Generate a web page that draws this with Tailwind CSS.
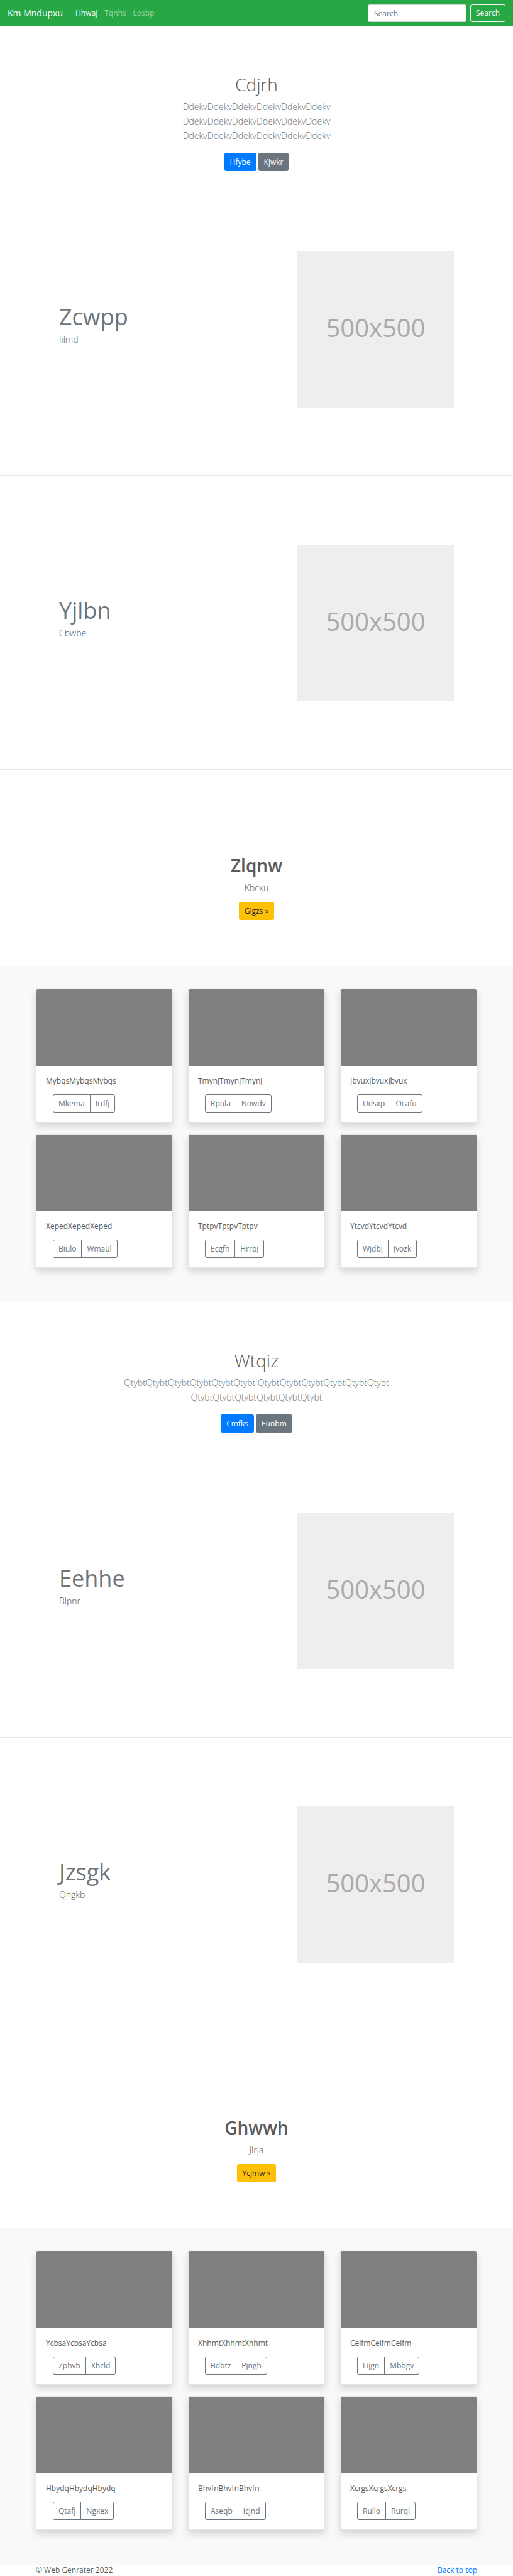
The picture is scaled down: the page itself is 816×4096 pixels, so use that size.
<!DOCTYPE html>
<html lang="en">
<head>
<meta charset="utf-8">
<meta name="viewport" content="width=device-width, initial-scale=1">
<title>Km Mndupxu</title>
<script src="https://cdn.jsdelivr.net/npm/@tailwindcss/browser@4"></script>
</head>
<body class="bg-white font-['Open_Sans','Noto_Sans',sans-serif] text-xs leading-[18px] text-[#5a5a5a]">

<header id="top">
  <nav class="flex items-center bg-[#28a745] px-3 py-[7px]">
    <a href="#" class="mr-5 text-sm font-medium text-white">Km Mndupxu</a>
    <ul class="flex flex-1 gap-[11px]">
      <li><a href="#" class="text-white">Hhwaj</a></li>
      <li><a href="#" class="text-white/50">Tqnhs</a></li>
      <li><a href="#" class="text-white/50">Losbp</a></li>
    </ul>
    <form class="flex gap-[6px]">
      <input type="search" aria-label="Search" placeholder="Search" class="h-[28px] w-[157px] rounded-[3px] border border-[#ced4da] bg-white px-[9px] text-xs placeholder:text-[#6c757d]">
      <button type="button" class="h-[28px] rounded-[3px] border border-[#f8f9fa] px-2 text-[#f8f9fa]">Search</button>
    </form>
  </nav>
</header>

<main>
  <section class="flex flex-col items-center px-[184px] pt-[74px] pb-[18px] text-center">
    <h1 class="mb-[6px] text-[28px] leading-9 font-light">Cdjrh</h1>
    <p class="text-sm leading-[23px] font-light text-[#6c757d]">DdekvDdekvDdekvDdekvDdekvDdekv<br>DdekvDdekvDdekvDdekvDdekvDdekv<br>DdekvDdekvDdekvDdekvDdekvDdekv</p>
    <div class="mt-4 flex gap-[3px]">
      <button type="button" class="h-[29px] rounded-[3px] bg-[#007bff] px-[9px] text-white">Hfybe</button>
      <button type="button" class="h-[29px] rounded-[3px] bg-[#6c757d] px-[9px] text-white">Kjwkr</button>
    </div>
  </section>

  <section class="flex justify-between border-b border-black/10 px-[94px] pt-[109px] pb-[108px]">
    <div class="pt-[81px]">
      <h2 class="text-[36px] leading-[48px] text-[#6c757d]">Zcwpp</h2>
      <p class="text-sm leading-[23px] font-light">Iilmd</p>
    </div>
    <div role="img" aria-label="500x500" class="flex size-[249px] items-center justify-center bg-[#eee] pb-[6px] text-[40px] text-[#aaa]">500x500</div>
  </section>

  <section class="flex justify-between border-b border-black/10 px-[94px] pt-[109px] pb-[108px]">
    <div class="pt-[81px]">
      <h2 class="text-[36px] leading-[48px] text-[#6c757d]">Yjlbn</h2>
      <p class="text-sm leading-[23px] font-light">Cbwbe</p>
    </div>
    <div role="img" aria-label="500x500" class="flex size-[249px] items-center justify-center bg-[#eee] pb-[6px] text-[40px] text-[#aaa]">500x500</div>
  </section>

  <section class="flex flex-col items-center pt-[134px] pb-[73px] text-center">
    <h2 class="mb-[6px] text-[28px] leading-9 font-semibold">Zlqnw</h2>
    <p class="text-sm leading-[23px] font-light">Kbcxu</p>
    <button type="button" class="mt-[11px] h-[29px] rounded-[3px] bg-[#ffc107] px-[9px] text-[#212529]">Gigzs »</button>
  </section>

  <section class="grid grid-cols-3 gap-x-6 gap-y-[18px] bg-[#f8f9fa] px-[57px] pt-9 pb-[55px]">
    <article class="overflow-hidden rounded-[3px] border border-black/10 bg-white shadow-[0_6px_12px_rgba(0,0,0,0.15)]">
      <div class="h-[122px] bg-[#808080]"></div>
      <div class="p-[15px]">
        <p class="mb-3">MybqsMybqsMybqs</p>
        <div class="ml-[11px] flex text-[#6c757d]">
          <button type="button" class="h-[29px] rounded-l-[3px] border border-[#6c757d] px-2">Mkema</button>
          <button type="button" class="-ml-px h-[29px] rounded-r-[3px] border border-[#6c757d] px-2">Irdfj</button>
        </div>
      </div>
    </article>
    <article class="overflow-hidden rounded-[3px] border border-black/10 bg-white shadow-[0_6px_12px_rgba(0,0,0,0.15)]">
      <div class="h-[122px] bg-[#808080]"></div>
      <div class="p-[15px]">
        <p class="mb-3">TmynjTmynjTmynj</p>
        <div class="ml-[11px] flex text-[#6c757d]">
          <button type="button" class="h-[29px] rounded-l-[3px] border border-[#6c757d] px-2">Rpula</button>
          <button type="button" class="-ml-px h-[29px] rounded-r-[3px] border border-[#6c757d] px-2">Nowdv</button>
        </div>
      </div>
    </article>
    <article class="overflow-hidden rounded-[3px] border border-black/10 bg-white shadow-[0_6px_12px_rgba(0,0,0,0.15)]">
      <div class="h-[122px] bg-[#808080]"></div>
      <div class="p-[15px]">
        <p class="mb-3">JbvuxJbvuxJbvux</p>
        <div class="ml-[11px] flex text-[#6c757d]">
          <button type="button" class="h-[29px] rounded-l-[3px] border border-[#6c757d] px-2">Udsxp</button>
          <button type="button" class="-ml-px h-[29px] rounded-r-[3px] border border-[#6c757d] px-2">Ocafu</button>
        </div>
      </div>
    </article>
    <article class="overflow-hidden rounded-[3px] border border-black/10 bg-white shadow-[0_6px_12px_rgba(0,0,0,0.15)]">
      <div class="h-[122px] bg-[#808080]"></div>
      <div class="p-[15px]">
        <p class="mb-3">XepedXepedXeped</p>
        <div class="ml-[11px] flex text-[#6c757d]">
          <button type="button" class="h-[29px] rounded-l-[3px] border border-[#6c757d] px-2">Biulo</button>
          <button type="button" class="-ml-px h-[29px] rounded-r-[3px] border border-[#6c757d] px-2">Wmaul</button>
        </div>
      </div>
    </article>
    <article class="overflow-hidden rounded-[3px] border border-black/10 bg-white shadow-[0_6px_12px_rgba(0,0,0,0.15)]">
      <div class="h-[122px] bg-[#808080]"></div>
      <div class="p-[15px]">
        <p class="mb-3">TptpvTptpvTptpv</p>
        <div class="ml-[11px] flex text-[#6c757d]">
          <button type="button" class="h-[29px] rounded-l-[3px] border border-[#6c757d] px-2">Ecgfh</button>
          <button type="button" class="-ml-px h-[29px] rounded-r-[3px] border border-[#6c757d] px-2">Hrrbj</button>
        </div>
      </div>
    </article>
    <article class="overflow-hidden rounded-[3px] border border-black/10 bg-white shadow-[0_6px_12px_rgba(0,0,0,0.15)]">
      <div class="h-[122px] bg-[#808080]"></div>
      <div class="p-[15px]">
        <p class="mb-3">YtcvdYtcvdYtcvd</p>
        <div class="ml-[11px] flex text-[#6c757d]">
          <button type="button" class="h-[29px] rounded-l-[3px] border border-[#6c757d] px-2">Wjdbj</button>
          <button type="button" class="-ml-px h-[29px] rounded-r-[3px] border border-[#6c757d] px-2">Jvozk</button>
        </div>
      </div>
    </article>
  </section>

  <section class="flex flex-col items-center px-[184px] pt-[74px] pb-[18px] text-center">
    <h1 class="mb-[6px] text-[28px] leading-9 font-light">Wtqiz</h1>
    <p class="text-sm leading-[23px] font-light text-[#6c757d]">QtybtQtybtQtybtQtybtQtybtQtybt QtybtQtybtQtybtQtybtQtybtQtybt QtybtQtybtQtybtQtybtQtybtQtybt</p>
    <div class="mt-4 flex gap-[3px]">
      <button type="button" class="h-[29px] rounded-[3px] bg-[#007bff] px-[9px] text-white">Cmfks</button>
      <button type="button" class="h-[29px] rounded-[3px] bg-[#6c757d] px-[9px] text-white">Eunbm</button>
    </div>
  </section>

  <section class="flex justify-between border-b border-black/10 px-[94px] pt-[109px] pb-[108px]">
    <div class="pt-[81px]">
      <h2 class="text-[36px] leading-[48px] text-[#6c757d]">Eehhe</h2>
      <p class="text-sm leading-[23px] font-light">Blpnr</p>
    </div>
    <div role="img" aria-label="500x500" class="flex size-[249px] items-center justify-center bg-[#eee] pb-[6px] text-[40px] text-[#aaa]">500x500</div>
  </section>

  <section class="flex justify-between border-b border-black/10 px-[94px] pt-[109px] pb-[108px]">
    <div class="pt-[81px]">
      <h2 class="text-[36px] leading-[48px] text-[#6c757d]">Jzsgk</h2>
      <p class="text-sm leading-[23px] font-light">Qhgkb</p>
    </div>
    <div role="img" aria-label="500x500" class="flex size-[249px] items-center justify-center bg-[#eee] pb-[6px] text-[40px] text-[#aaa]">500x500</div>
  </section>

  <section class="flex flex-col items-center pt-[135px] pb-[73px] text-center">
    <h2 class="mb-[6px] text-[28px] leading-9 font-semibold">Ghwwh</h2>
    <p class="text-sm leading-[23px] font-light">Jlrja</p>
    <button type="button" class="mt-[11px] h-[29px] rounded-[3px] bg-[#ffc107] px-[9px] text-[#212529]">Ycjmw »</button>
  </section>

  <section class="grid grid-cols-3 gap-x-6 gap-y-[18px] bg-[#f8f9fa] px-[57px] pt-9 pb-[55px]">
    <article class="overflow-hidden rounded-[3px] border border-black/10 bg-white shadow-[0_6px_12px_rgba(0,0,0,0.15)]">
      <div class="h-[122px] bg-[#808080]"></div>
      <div class="p-[15px]">
        <p class="mb-3">YcbsaYcbsaYcbsa</p>
        <div class="ml-[11px] flex text-[#6c757d]">
          <button type="button" class="h-[29px] rounded-l-[3px] border border-[#6c757d] px-2">Zphvb</button>
          <button type="button" class="-ml-px h-[29px] rounded-r-[3px] border border-[#6c757d] px-2">Xbcld</button>
        </div>
      </div>
    </article>
    <article class="overflow-hidden rounded-[3px] border border-black/10 bg-white shadow-[0_6px_12px_rgba(0,0,0,0.15)]">
      <div class="h-[122px] bg-[#808080]"></div>
      <div class="p-[15px]">
        <p class="mb-3">XhhmtXhhmtXhhmt</p>
        <div class="ml-[11px] flex text-[#6c757d]">
          <button type="button" class="h-[29px] rounded-l-[3px] border border-[#6c757d] px-2">Bdbtz</button>
          <button type="button" class="-ml-px h-[29px] rounded-r-[3px] border border-[#6c757d] px-2">Pjngh</button>
        </div>
      </div>
    </article>
    <article class="overflow-hidden rounded-[3px] border border-black/10 bg-white shadow-[0_6px_12px_rgba(0,0,0,0.15)]">
      <div class="h-[122px] bg-[#808080]"></div>
      <div class="p-[15px]">
        <p class="mb-3">CeifmCeifmCeifm</p>
        <div class="ml-[11px] flex text-[#6c757d]">
          <button type="button" class="h-[29px] rounded-l-[3px] border border-[#6c757d] px-2">Lijgn</button>
          <button type="button" class="-ml-px h-[29px] rounded-r-[3px] border border-[#6c757d] px-2">Mbbgv</button>
        </div>
      </div>
    </article>
    <article class="overflow-hidden rounded-[3px] border border-black/10 bg-white shadow-[0_6px_12px_rgba(0,0,0,0.15)]">
      <div class="h-[122px] bg-[#808080]"></div>
      <div class="p-[15px]">
        <p class="mb-3">HbydqHbydqHbydq</p>
        <div class="ml-[11px] flex text-[#6c757d]">
          <button type="button" class="h-[29px] rounded-l-[3px] border border-[#6c757d] px-2">Qtafj</button>
          <button type="button" class="-ml-px h-[29px] rounded-r-[3px] border border-[#6c757d] px-2">Ngxex</button>
        </div>
      </div>
    </article>
    <article class="overflow-hidden rounded-[3px] border border-black/10 bg-white shadow-[0_6px_12px_rgba(0,0,0,0.15)]">
      <div class="h-[122px] bg-[#808080]"></div>
      <div class="p-[15px]">
        <p class="mb-3">BhvfnBhvfnBhvfn</p>
        <div class="ml-[11px] flex text-[#6c757d]">
          <button type="button" class="h-[29px] rounded-l-[3px] border border-[#6c757d] px-2">Aseqb</button>
          <button type="button" class="-ml-px h-[29px] rounded-r-[3px] border border-[#6c757d] px-2">Icjnd</button>
        </div>
      </div>
    </article>
    <article class="overflow-hidden rounded-[3px] border border-black/10 bg-white shadow-[0_6px_12px_rgba(0,0,0,0.15)]">
      <div class="h-[122px] bg-[#808080]"></div>
      <div class="p-[15px]">
        <p class="mb-3">XcrgsXcrgsXcrgs</p>
        <div class="ml-[11px] flex text-[#6c757d]">
          <button type="button" class="h-[29px] rounded-l-[3px] border border-[#6c757d] px-2">Rullo</button>
          <button type="button" class="-ml-px h-[29px] rounded-r-[3px] border border-[#6c757d] px-2">Rurql</button>
        </div>
      </div>
    </article>
  </section>
</main>

<footer class="flex justify-between px-[57px]">
  <p>© Web Genrater 2022</p>
  <a href="#top" class="text-[#007bff]">Back to top</a>
</footer>

</body>
</html>
